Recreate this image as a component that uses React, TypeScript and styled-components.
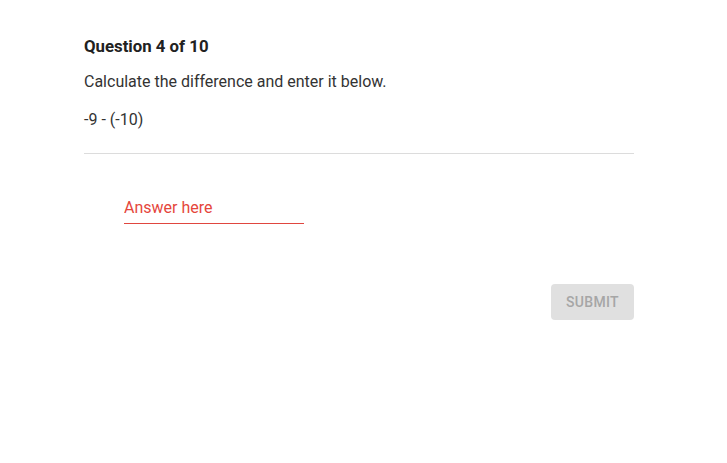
import React from "react";
import styled, { createGlobalStyle } from "styled-components";

const Global = createGlobalStyle`
  html, body { margin: 0; padding: 0; background: #fff; }
  body { font-family: Roboto, "Noto Sans", sans-serif; color: #212121; }
  * { box-sizing: border-box; }
`;

const Page = styled.div`
  width: 727px;
  height: 463px;
  padding: 36px 93px 0 84px;
`;

const Card = styled.div`
  width: 550px;
  display: flex;
  flex-direction: column;
`;

const Title = styled.h2`
  margin: 0;
  font-size: 16.8px;
  line-height: 20px;
  font-weight: 700;
  color: #212121;
`;

const Prompt = styled.p`
  margin: 16px 0 0;
  font-size: 16px;
  line-height: 20px;
  color: #333;
`;

const Expression = styled.p`
  margin: 18px 0 0;
  font-size: 16px;
  line-height: 20px;
  color: #333;
`;

const Divider = styled.hr`
  margin: 23px 0 0;
  border: none;
  border-top: 1px solid #dcdcdc;
  height: 0;
`;

const AnswerRow = styled.div`
  padding: 44px 40px 0;
`;

const Field = styled.label`
  display: block;
  width: 180px;
  padding-bottom: 5px;
  border-bottom: 1px solid #e0463f;
`;

const AnswerInput = styled.input`
  display: block;
  width: 100%;
  border: none;
  outline: none;
  font-family: Roboto, "Noto Sans", sans-serif;
  font-size: 16px;
  line-height: 20px;
  padding: 0;
  color: #212121;
  background: transparent;
  &::placeholder { color: #e5463c; opacity: 1; }
`;

const Actions = styled.div`
  display: flex;
  justify-content: flex-end;
  padding-top: 60px;
`;

const SubmitButton = styled.button`
  width: 83px;
  height: 36px;
  border: none;
  border-radius: 4px;
  background: #e0e0e0;
  color: #a6a6a6;
  font-family: Roboto, "Noto Sans", sans-serif;
  font-size: 14px;
  font-weight: 500;
  letter-spacing: 0.3px;
  text-transform: uppercase;
`;

export default function App() {
  return (
    <>
      <Global />
      <Page>
        <Card>
          <Title>Question 4 of 10</Title>
          <Prompt>Calculate the difference and enter it below.</Prompt>
          <Expression>-9 - (-10)</Expression>
          <Divider />
          <AnswerRow>
            <Field>
              <AnswerInput placeholder="Answer here" />
            </Field>
          </AnswerRow>
          <Actions>
            <SubmitButton disabled>Submit</SubmitButton>
          </Actions>
        </Card>
      </Page>
    </>
  );
}
